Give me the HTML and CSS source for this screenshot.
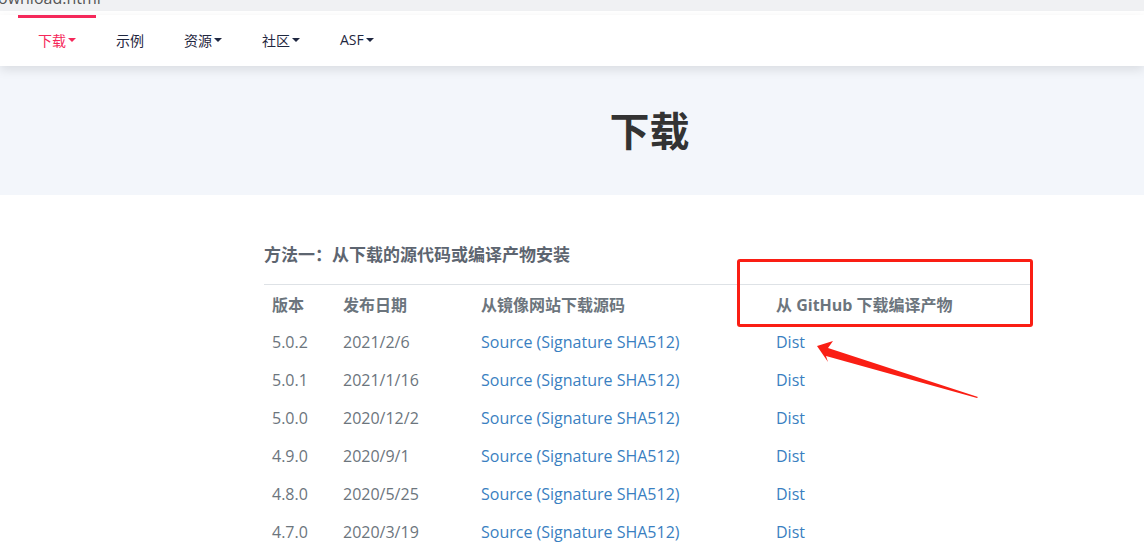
FILE: index.html
```html
<!DOCTYPE html>
<html lang="zh">
<head>
<meta charset="utf-8">
<link rel="stylesheet" href="styles.css">
</head>
<body>
<div class="urlbar"><span class="urltext">ownload.html</span></div>
<div class="gap"></div>
<nav class="nav">
  <a class="nav-item active">下载<span class="caret"></span></a>
  <a class="nav-item">示例</a>
  <a class="nav-item">资源<span class="caret"></span></a>
  <a class="nav-item">社区<span class="caret"></span></a>
  <a class="nav-item">ASF<span class="caret"></span></a>
</nav>
<header class="hero">
  <div class="container"><h1 class="title">下载</h1></div>
</header>
<main class="container main">
  <h2 class="section-title">方法一：从下载的源代码或编译产物安装</h2>
  <table class="dl-table">
    <thead>
      <tr><th class="c1">版本</th><th class="c2">发布日期</th><th class="c3">从镜像网站下载源码</th><th class="c4">从 GitHub 下载编译产物</th></tr>
    </thead>
    <tbody>
      <tr><td>5.0.2</td><td>2021/2/6</td><td><a>Source (Signature SHA512)</a></td><td><a>Dist</a></td></tr>
      <tr><td>5.0.1</td><td>2021/1/16</td><td><a>Source (Signature SHA512)</a></td><td><a>Dist</a></td></tr>
      <tr><td>5.0.0</td><td>2020/12/2</td><td><a>Source (Signature SHA512)</a></td><td><a>Dist</a></td></tr>
      <tr><td>4.9.0</td><td>2020/9/1</td><td><a>Source (Signature SHA512)</a></td><td><a>Dist</a></td></tr>
      <tr><td>4.8.0</td><td>2020/5/25</td><td><a>Source (Signature SHA512)</a></td><td><a>Dist</a></td></tr>
      <tr><td>4.7.0</td><td>2020/3/19</td><td><a>Source (Signature SHA512)</a></td><td><a>Dist</a></td></tr>
    </tbody>
  </table>
</main>
<div class="highlight-box"></div>
<svg class="arrow" width="180" height="70" viewBox="0 0 180 70">
  <polygon points="7,16 23,11 18,18 168,67 167,68 16,26 18,32" fill="#fa1e14"/>
</svg>
</body>
</html>
```
FILE: styles.css
```css
html, body { margin: 0; padding: 0; }
body {
  font-family: "Open Sans", "Noto Sans CJK SC", sans-serif;
  background: #fff;
  width: 1144px;
  height: 543px;
  overflow: hidden;
  position: relative;
}
.urlbar {
  height: 11px;
  background: #f0f1f3;
  overflow: hidden;
}
.urltext {
  display: block;
  margin-top: -12px;
  margin-left: -2px;
  font-size: 16px;
  line-height: 20px;
  color: #555;
}
.gap { height: 4px; background: #fff; border-bottom: 1px solid #dcdcdc; }
.nav {
  height: 51px;
  display: flex;
  align-items: stretch;
  padding-left: 18px;
  background: #fff;
  position: relative;
  z-index: 2;
  box-shadow: 0 4px 10px rgba(0,0,0,0.10);
  margin-top: -1px;
}
.nav-item {
  display: flex;
  align-items: center;
  font-size: 14px;
  color: #1f2740;
  padding: 0 20px 5px;
  border-top: 3px solid transparent;
  box-sizing: border-box;
}
.nav-item.active { color: #f5285a; border-top-color: #f5285a; }
.caret {
  display: inline-block;
  width: 0; height: 0;
  border-left: 4px solid transparent;
  border-right: 4px solid transparent;
  border-top: 4px solid currentColor;
  margin-left: 2px;
}
.hero {
  background: #f3f6fb;
  height: 129px;
  display: flex;
  align-items: center;
}
.container {
  margin-left: 264px;
  width: 767px;
}
.title {
  margin: 0 0 4px;
  text-align: center;
  font-size: 40px;
  font-weight: 700;
  color: #333;
  padding-left: 4px;
}
.main { padding-top: 47px; }
.section-title {
  margin: 0;
  font-size: 17px;
  font-weight: 700;
  color: #5d6570;
  line-height: 26px;
  padding-bottom: 16px;
  border-bottom: 1px solid #dee2e6;
}
.dl-table {
  width: 100%;
  border-collapse: collapse;
  font-size: 16px;
  color: #6c757d;
}
.dl-table th {
  text-align: left;
  font-weight: 700;
  color: #6c757d;
  padding: 9px 8px 7px;
  height: 38px;
  box-sizing: border-box;
  line-height: 22px;
}
.dl-table td {
  padding: 8px 8px;
  height: 38px;
  box-sizing: border-box;
  line-height: 22px;
}
.c1 { width: 71px; }
.c2 { width: 138px; }
.c3 { width: 295px; }
.dl-table a { color: #3a7fc1; text-decoration: none; }
.highlight-box {
  position: absolute;
  left: 737px;
  top: 259px;
  width: 290px;
  height: 62px;
  border: 3px solid #fa1e14;
  border-radius: 3px;
  z-index: 5;
}
.arrow {
  position: absolute;
  left: 810px;
  top: 330px;
  z-index: 5;
}
```
